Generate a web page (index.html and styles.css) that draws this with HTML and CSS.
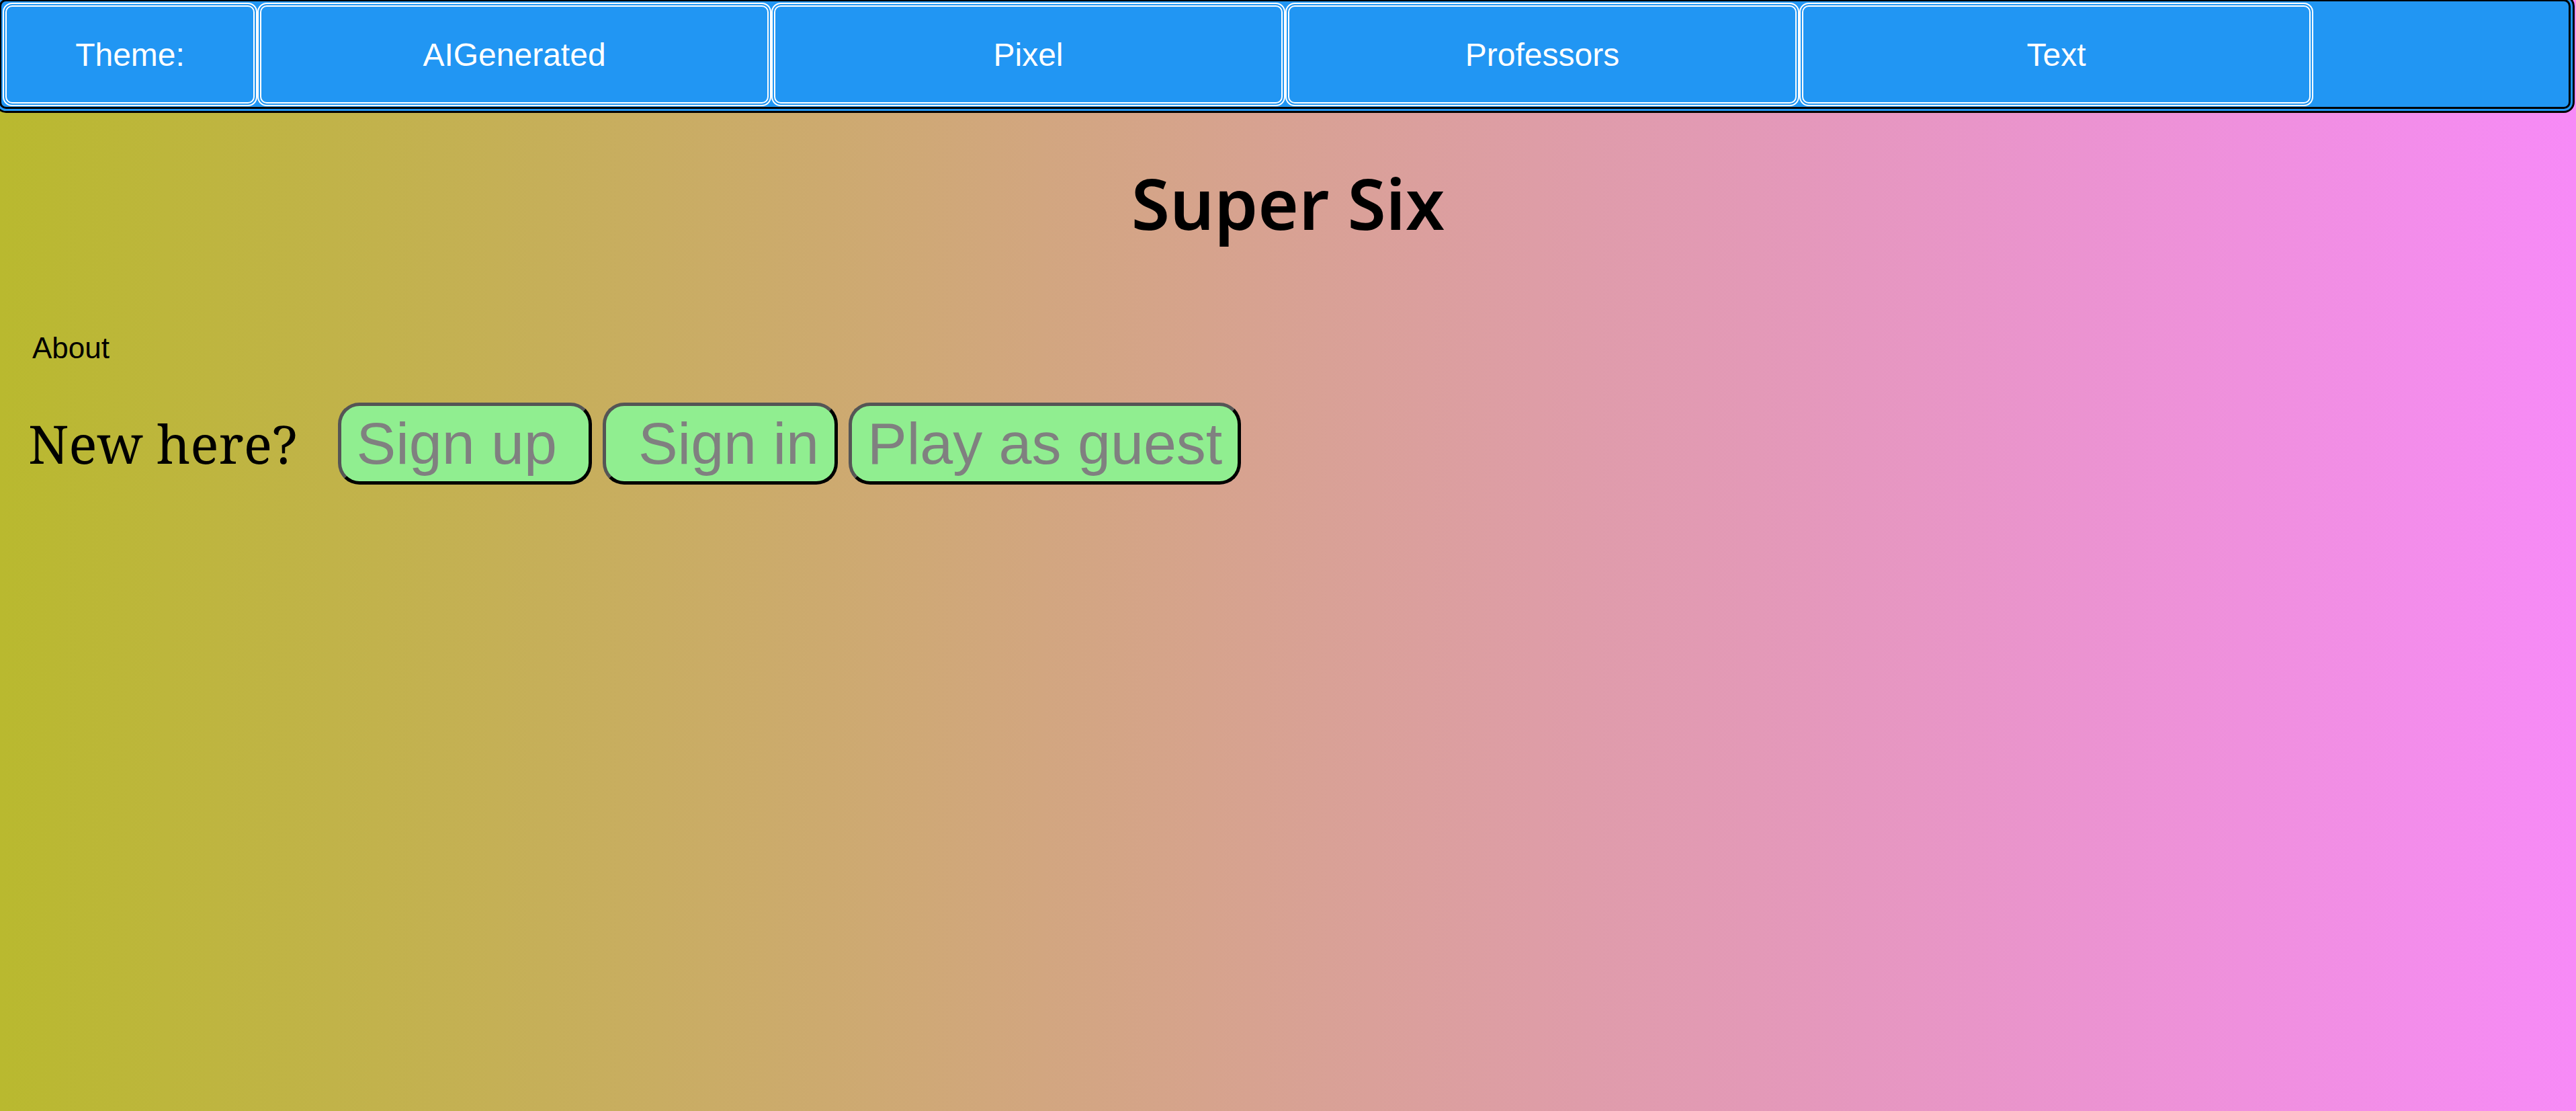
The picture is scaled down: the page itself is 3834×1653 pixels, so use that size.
FILE: index.html
```html
<!DOCTYPE html>
<html lang="en">
<head>
<meta charset="utf-8">
<title>Super Six</title>
<link rel="stylesheet" href="styles.css">
</head>
<body>
<nav class="themebar">
  <button class="theme-btn theme-label">Theme:</button>
  <button class="theme-btn">AIGenerated</button>
  <button class="theme-btn">Pixel</button>
  <button class="theme-btn">Professors</button>
  <button class="theme-btn">Text</button>
</nav>
<h1 class="title">Super Six</h1>
<div class="about">About</div>
<div class="welcome">
  <span class="new-here">New here?</span>
  <button class="action">Sign up&nbsp;</button>
  <button class="action">&nbsp;Sign in</button>
  <button class="action">Play as guest</button>
</div>
</body>
</html>
```

FILE: styles.css
```css
html, body {
  margin: 0;
  padding: 0;
}

body {
  min-height: 100vh;
  background: linear-gradient(to right, #b9b92f, #f78af7);
  font-family: "Liberation Sans", Arial, sans-serif;
  overflow: hidden;
}

.themebar {
  display: flex;
  margin: -7px 2px 0 -7px;
  padding: 2px 0 1px 2px;
  border: 9px double #000;
  border-radius: 16px;
  background: #2196f3;
}

.theme-btn {
  flex: 0 0 765px;
  height: 154px;
  margin: 0;
  padding: 0;
  border: 6px double #fff;
  border-radius: 14px;
  background: transparent;
  color: #fff;
  font-family: "Liberation Sans", Arial, sans-serif;
  font-size: 48px;
  cursor: pointer;
}

.theme-label {
  flex-basis: 379px;
}

.title {
  margin: 72px 0 0;
  text-align: center;
  font-family: "Noto Sans", "Open Sans", sans-serif;
  font-weight: 600;
  font-size: 104px;
  line-height: 1.2;
  color: #000;
}

.about {
  margin-top: 128px;
  padding-left: 48px;
  font-size: 44px;
  line-height: 1.15;
  color: #000;
}

.welcome {
  display: flex;
  align-items: baseline;
  gap: 16px;
  margin-top: 56px;
  padding-left: 42px;
}

.new-here {
  margin-right: 44px;
  font-family: "Noto Serif", "Liberation Serif", serif;
  font-size: 79px;
  color: #000;
}

.action {
  margin: 0;
  padding: 5px 23px;
  border: 5px solid;
  border-color: #555 #000 #000 #555;
  border-radius: 32px;
  background: #90ee90;
  color: #808080;
  font-family: "Liberation Sans", Arial, sans-serif;
  font-size: 88px;
  line-height: normal;
  white-space: pre;
  cursor: pointer;
}
```
